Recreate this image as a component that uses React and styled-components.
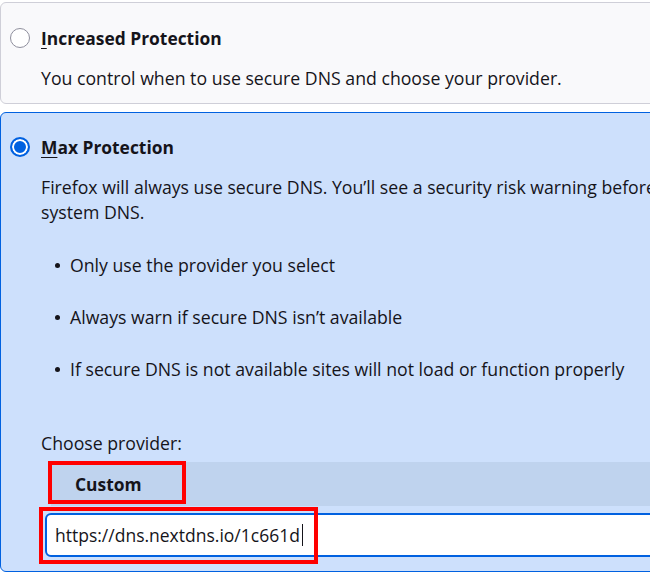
import React from "react";
import styled, { createGlobalStyle } from "styled-components";

const GlobalStyle = createGlobalStyle`
    html, body {
        margin: 0;
        padding: 0;
        background: #ffffff;
        overflow: hidden;
    }
    body {
        font-family: "Open Sans", "Noto Sans", sans-serif;
        color: #15141a;
    }
`

// the cards run past the right edge of the window, as in the settings pane
const Page = styled.div`
    width: 720px;
    padding-top: 2px;
    display: flex;
    flex-direction: column;
    gap: 8px;
`

const Card = styled.div`
    border: 1px solid ${props => props.selected ? '#0061e0' : '#cfcfd8'};
    background: ${props => props.selected ? '#cde0fc' : '#f9f9fb'};
    border-radius: 6px;
    padding: ${props => props.selected ? 22 : 23}px 10px ${props => props.selected ? 14 : 12}px 9px;
`

const Header = styled.div`
    display: flex;
    align-items: center;
    gap: 11px;
    height: 24px;
`

const Radio = styled.span`
    width: 20px;
    height: 20px;
    box-sizing: border-box;
    border-radius: 50%;
    flex-shrink: 0;
    border: ${props => props.checked ? '2px solid #0061e0' : '1px solid #8f8f9d'};
    background: ${props => props.checked ? '#0061e0' : '#ffffff'};
    box-shadow: ${props => props.checked ? 'inset 0 0 0 2px #ffffff' : 'none'};
`

const Title = styled.span`
    font-size: 17.4px;
    font-weight: 700;
    line-height: 24px;

    u {
        text-decoration-thickness: 1px;
        text-underline-offset: 3px;
    }
`

const Body = styled.div`
    padding-left: 31px;
    display: flex;
    flex-direction: column;
`

const Text = styled.p`
    margin: ${props => props.top || 0}px 0 0;
    font-size: 17.7px;
    line-height: 25px;
    white-space: nowrap;
`

const List = styled.ul`
    list-style: none;
    margin: 28px 0 0;
    padding: 0;
    display: flex;
    flex-direction: column;
    gap: 27px;
`

const Item = styled.li`
    position: relative;
    padding-left: 29px;
    font-size: 17.7px;
    line-height: 25px;
    white-space: nowrap;

    &::before {
        content: "";
        position: absolute;
        left: 14px;
        top: 10px;
        width: 5px;
        height: 5px;
        border-radius: 50%;
        background: #15141a;
    }
`

const Highlighted = styled.div`
    position: relative;
`

// red annotation frames drawn over the controls
const Marker = styled.span`
    position: absolute;
    left: ${props => props.left}px;
    top: ${props => props.top}px;
    width: ${props => props.width}px;
    height: ${props => props.height}px;
    box-sizing: border-box;
    border: 4px solid #ff0000;
    pointer-events: none;
`

const Select = styled.div`
    margin: 6px 0 0 10px;
    height: 44px;
    background: #bfd3ee;
    display: flex;
    align-items: center;
    padding-left: 24px;
    font-size: 17.4px;
    font-weight: 700;
`

const Field = styled.div`
    margin: 7px 0 0 4px;
    height: 44px;
    box-sizing: border-box;
    border: 2px solid #0061e0;
    border-radius: 6px;
    background: #ffffff;
    display: flex;
    align-items: center;
    padding-left: 8px;
    font-size: 17.5px;
`

const Caret = styled.span`
    display: inline-block;
    width: 1px;
    height: 22px;
    margin-left: 2px;
    background: #15141a;
`

function App() {
    return (
        <>
            <GlobalStyle />
            <Page>
                <Card>
                    <Header>
                        <Radio />
                        <Title><u>I</u>ncreased Protection</Title>
                    </Header>
                    <Body>
                        <Text top={16}>You control when to use secure DNS and choose your provider.</Text>
                    </Body>
                </Card>
                <Card selected>
                    <Header>
                        <Radio checked />
                        <Title><u>M</u>ax Protection</Title>
                    </Header>
                    <Body>
                        <Text top={16}>Firefox will always use secure DNS. You’ll see a security risk warning before we use your<br />system DNS.</Text>
                        <List>
                            <Item>Only use the provider you select</Item>
                            <Item>Always warn if secure DNS isn’t available</Item>
                            <Item>If secure DNS is not available sites will not load or function properly</Item>
                        </List>
                        <Text top={49}>Choose provider:</Text>
                        <Highlighted>
                            <Select>Custom</Select>
                            <Marker left={7} top={5} width={138} height={43} />
                        </Highlighted>
                        <Highlighted>
                            <Field>https://dns.nextdns.io/1c661d<Caret /></Field>
                            <Marker left={-2} top={1} width={279} height={57} />
                        </Highlighted>
                    </Body>
                </Card>
            </Page>
        </>
    )
}

export default App;
